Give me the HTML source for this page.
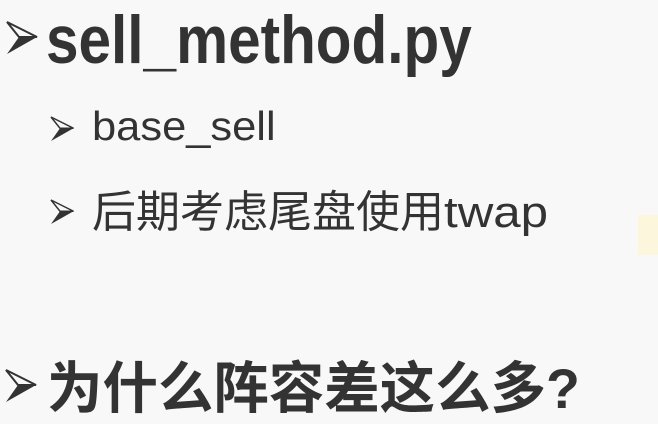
<!DOCTYPE html>
<html><head><meta charset="utf-8"><style>
body{margin:0;width:658px;height:424px;background:#f8f8f8;overflow:hidden;position:relative;font-family:"Liberation Sans","Noto Sans CJK SC",sans-serif;color:#333}
.t{position:absolute;white-space:nowrap;transform-origin:0 0;line-height:1}
svg{position:absolute}
</style></head><body>
<svg width="658" height="424">
<defs><g id="ar"><polygon points="0,0 30,15 12,15" fill="none" stroke="#333" stroke-width="2"/><polygon points="12,15 30,15 0,32" fill="#333"/></g></defs>
<use href="#ar" transform="translate(7,22)"/>
<use href="#ar" transform="translate(51,117) scale(0.75)"/>
<use href="#ar" transform="translate(51,200) scale(0.75)"/>
<use href="#ar" transform="translate(6,370) scale(1)"/>
<rect x="638" y="215" width="20" height="40" fill="#fdf6d0" opacity="0.7"/>
</svg>
<div class="t" style="left:46px;top:6px;font-size:68px;font-weight:bold;transform:scaleX(0.86)">sell_method.py</div>
<div class="t" style="left:92px;top:106px;font-size:41px;transform:scaleX(1.06)">base_sell</div>
<div class="t" style="left:92px;top:191px;font-size:44px">后期考虑尾盘使用<span style="display:inline-block;transform:scaleX(1.12);transform-origin:0 0">twap</span></div>
<div class="t" style="left:47px;top:361px;font-size:56px;font-weight:bold;transform:scaleX(0.99)">为什么阵容差这么多?</div>
</body></html>
